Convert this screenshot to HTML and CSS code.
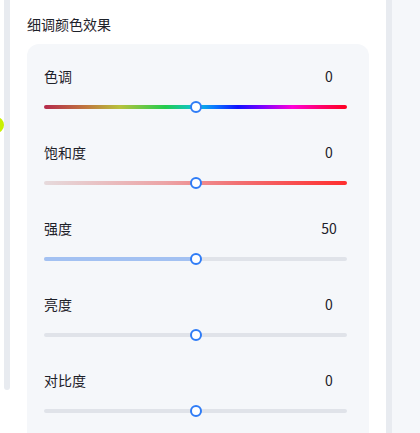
FILE: index.html
```html
<!DOCTYPE html>
<html lang="zh">
<head>
<meta charset="utf-8">
<link rel="stylesheet" href="styles.css">
</head>
<body>
<div class="page">
  <div class="gutter"><span class="blob"></span></div>
  <div class="rail left-rail"></div>
  <div class="panel">
    <div class="title">细调颜色效果</div>
    <div class="card">
      <div class="row">
        <div class="head"><span class="label">色调</span><span class="value">0</span></div>
        <div class="track hue"><span class="thumb" style="left:50%"></span></div>
      </div>
      <div class="row">
        <div class="head"><span class="label">饱和度</span><span class="value">0</span></div>
        <div class="track sat"><span class="thumb" style="left:50%"></span></div>
      </div>
      <div class="row">
        <div class="head"><span class="label">强度</span><span class="value">50</span></div>
        <div class="track plain"><span class="fill" style="width:50%"></span><span class="thumb" style="left:50%"></span></div>
      </div>
      <div class="row">
        <div class="head"><span class="label">亮度</span><span class="value">0</span></div>
        <div class="track plain"><span class="thumb" style="left:50%"></span></div>
      </div>
      <div class="row">
        <div class="head"><span class="label">对比度</span><span class="value">0</span></div>
        <div class="track plain"><span class="thumb" style="left:50%"></span></div>
      </div>
    </div>
  </div>
  <div class="rail right-rail"></div>
  <div class="side"></div>
</div>
</body>
</html>
```
FILE: styles.css
```css
* { box-sizing: border-box; }
html, body { margin: 0; padding: 0; background: #ffffff; }
body {
  width: 420px;
  height: 433px;
  overflow: hidden;
  font-family: "Noto Sans CJK SC", "Noto Sans", sans-serif;
  color: #1d2129;
}
.page {
  display: flex;
  height: 433px;
}
.gutter {
  width: 4px;
  position: relative;
  background: #ffffff;
}
.blob {
  position: absolute;
  left: -12px;
  top: 117px;
  width: 16px;
  height: 16px;
  border-radius: 50%;
  background: #c9f000;
}
.rail {
  width: 6px;
  background: #e8ebf0;
}
.left-rail {
  height: 390px;
  border-radius: 0 0 3px 3px;
}
.panel {
  width: 376px;
  background: #ffffff;
  padding: 13px 17px 0 17px;
}
.title {
  font-size: 14px;
  line-height: 22px;
  height: 22px;
  margin-bottom: 9px;
}
.card {
  background: #f5f7fa;
  border-radius: 12px 12px 0 0;
  padding: 22px 22px 0 17px;
  height: 400px;
  display: flex;
  flex-direction: column;
  gap: 33px;
}
.row {
  display: flex;
  flex-direction: column;
  gap: 19px;
}
.head {
  display: flex;
  justify-content: space-between;
  align-items: center;
  height: 20px;
  font-size: 14px;
  line-height: 20px;
}
.value {
  width: 36px;
  text-align: center;
}
.track {
  position: relative;
  height: 4px;
  border-radius: 2px;
  background: #e0e3e9;
}
.track.hue {
  background: linear-gradient(to right,
    #b52a4c 0%,
    #c0783e 14%,
    #b8c23c 25%,
    #22cc4e 40%,
    #0cc4d6 50%,
    #0a7cff 56%,
    #1010ff 64%,
    #7a00ff 72%,
    #ff00d8 82%,
    #ff0066 92%,
    #ff0020 100%);
}
.track.sat {
  background: linear-gradient(to right, #e6dadc 0%, #eca4a6 40%, #f26e70 65%, #ff2e2e 100%);
}
.fill {
  position: absolute;
  left: 0;
  top: 0;
  height: 4px;
  border-radius: 2px;
  background: #a3c1f2;
}
.thumb {
  position: absolute;
  top: 50%;
  width: 12px;
  height: 12px;
  margin-left: -6px;
  margin-top: -6px;
  border-radius: 50%;
  background: #ffffff;
  border: 2px solid #2f7cf6;
}
.right-rail {
  height: 433px;
}
.side {
  flex: 1;
  background: #f5f7fa;
}
```
